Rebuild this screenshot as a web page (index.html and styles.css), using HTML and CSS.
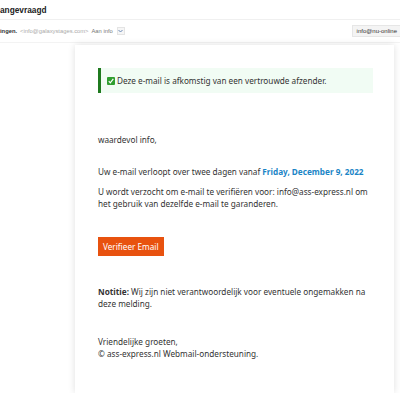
FILE: index.html
```html
<!DOCTYPE html>
<html lang="nl">
<head>
    <meta charset="UTF-8">
    <title>Webmail</title>
    <link rel="stylesheet" href="styles.css">
</head>
<body>
    <div class="mail-head">
        <div class="subject">angevraagd</div>
        <div class="sender-row">
            <div class="sender">
                <strong>ingen.</strong>
                <span class="addr">&lt;info@galaxystages.com&gt;</span>
                <span class="to">Aan info</span>
                <span class="more">
                    <svg width="5" height="4" viewBox="0 0 5 4"><path d="M0.5 1 L2.5 3 L4.5 1" fill="none" stroke="#6a8ab8" stroke-width="1"/></svg>
                </span>
            </div>
            <div class="account">info@nu-online</div>
        </div>
    </div>

    <div class="mail-body">
        <div class="card">
            <div class="trusted">
                <span class="check">
                    <svg width="8" height="8" viewBox="0 0 8 8"><path d="M1.8 4.2 L3.3 5.8 L6.3 1.8" fill="none" stroke="#fff" stroke-width="1.2"/></svg>
                </span>
                Deze e-mail is afkomstig van een vertrouwde afzender.
            </div>

            <p class="greet">waardevol info,</p>
            <p class="expire">Uw e-mail verloopt over twee dagen vanaf <span class="date">Friday, December 9, 2022</span></p>
            <p class="verify">U wordt verzocht om e-mail te verifiëren voor: info@ass&#8209;express.nl om het gebruik van dezelfde e-mail te garanderen.</p>

            <a class="btn" href="#">Verifieer Email</a>

            <p class="note"><strong>Notitie:</strong> Wij zijn niet verantwoordelijk voor eventuele ongemakken na deze melding.</p>
            <p class="sign">Vriendelijke groeten,<br>© ass-express.nl Webmail-ondersteuning.</p>
        </div>
    </div>
</body>
</html>
```

FILE: styles.css
```css
body {
    margin: 0;
    font-family: "Noto Sans", "Open Sans", sans-serif;
    background: #fff;
    color: #333;
    overflow: hidden;
}
.mail-head {
    font-family: "Liberation Sans", Arial, sans-serif;
}
.subject {
    height: 19px;
    line-height: 20px;
    font-size: 8.3px;
    font-weight: bold;
    color: #222;
    border-bottom: 1px solid #f0f0f0;
}
.sender-row {
    display: flex;
    justify-content: space-between;
    align-items: center;
    height: 22px;
    border-bottom: 1px solid #f3f3f3;
}
.sender {
    font-size: 5.8px;
    color: #aaa;
    display: flex;
    align-items: center;
    gap: 3px;
}
.sender strong {
    color: #333;
}
.sender .to {
    color: #777;
}
.more {
    display: inline-flex;
    align-items: center;
    justify-content: center;
    width: 6px;
    height: 6px;
    border: 1px solid #e4e4e4;
    background: #f6f6f6;
    margin-left: 1px;
}
.account {
    font-size: 6px;
    color: #333;
    background: #f4f4f4;
    border: 1px solid #e6e6e6;
    padding: 2px 4px;
    margin-right: -2px;
}
.mail-body {
    padding: 2px 6px 0 75px;
}
.card {
    background: #fff;
    box-shadow: 0 0 7px rgba(0, 0, 0, 0.13);
    padding: 23px 21px 34px 23px;
    font-size: 8.2px;
    line-height: 11.5px;
}
.trusted {
    display: flex;
    align-items: center;
    gap: 2px;
    height: 25px;
    padding-left: 6px;
    border-left: 3px solid #1f7a1f;
    background: #f1fcf4;
    color: #333;
}
.check {
    display: inline-flex;
    align-items: center;
    justify-content: center;
    width: 8px;
    height: 8px;
    background: #2f9e2f;
    border-radius: 1px;
}
.card p {
    margin: 0;
}
.greet {
    margin-top: 41px !important;
}
.expire {
    margin-top: 20px !important;
}
.date {
    color: #1b85c6;
    font-weight: bold;
}
.verify {
    margin-top: 9px !important;
}
.btn {
    display: inline-block;
    margin-top: 28px;
    padding: 0 5px;
    height: 19px;
    line-height: 19px;
    background: #e8520f;
    color: #fff;
    text-decoration: none;
}
.note {
    margin-top: 30px !important;
}
.sign {
    margin-top: 27px !important;
}
```
